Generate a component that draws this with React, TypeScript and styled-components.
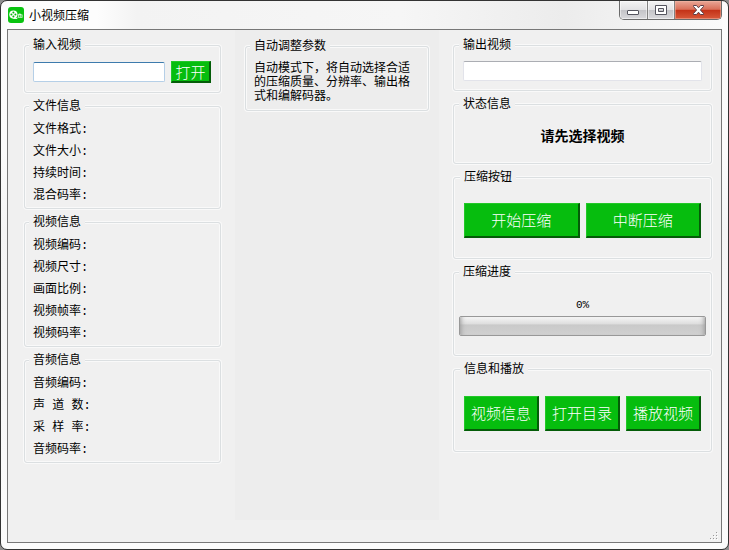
import React from 'react';
import styled, { createGlobalStyle, css } from 'styled-components';

const FACE = '#f0f0f0';
const GREEN = '#06bd0e';

const GlobalStyle = createGlobalStyle`
  * {
    box-sizing: border-box;
  }
  body {
    margin: 0;
    background: #8d8d8d;
    color: #000;
    font: 12px/14px 'Liberation Mono', 'Noto Sans CJK SC', monospace;
  }
  button,
  input {
    font: inherit;
  }
`;

const Window = styled.div`
  display: flex;
  flex-direction: column;
  min-height: 100vh;
  padding: 0 6px 6px;
  border: 1px solid #333;
  border-radius: 7px;
  background: linear-gradient(to bottom, #fcfcfc 0, #fbfbfb 150px, #f4f4f4 230px, #fbfbfb 100%);
`;

const TitleBar = styled.header`
  display: flex;
  align-items: center;
  gap: 5px;
  height: 28px;
  padding-left: 1px;
  border-radius: 6px 6px 0 0;
  background: linear-gradient(to right, #fdfdfd 0, #fdfdfd 90px, #f3f3f3 130px, #f6f6f6 55%, #ececec 78%, #fafafa 100%);
`;

const Title = styled.h1`
  flex: 1;
  margin: 0;
  font: 400 12px/16px 'Noto Sans CJK SC', sans-serif;
`;

const Controls = styled.div`
  display: flex;
  align-self: flex-start;
  height: 19px;
  border: 1px solid #6b6b6b;
  border-top: 0;
  border-radius: 0 0 5px 5px;
  overflow: hidden;
`;

const ControlButton = styled.button<{ $close?: boolean }>`
  display: grid;
  place-items: center;
  width: ${(p) => (p.$close ? 47 : 27)}px;
  padding: 0;
  border: 0;
  box-shadow: inset 0 0 0 1px #ffffff80;
  background: linear-gradient(#f4f4f4 0, #e2e2e4 48%, #c4c4c8 52%, #d9d9dc 100%);

  & + & {
    border-left: 1px solid #828282;
  }

  ${(p) =>
    p.$close &&
    css`
      box-shadow: inset 0 0 0 1px #f3b9a880;
      background: linear-gradient(#e9a797 0, #d9705a 46%, #c43318 52%, #d8593a 100%);
    `}
`;

const Client = styled.main`
  flex: 1;
  display: grid;
  grid-template-columns: minmax(0, 197fr) minmax(0, 204fr) minmax(0, 259fr);
  column-gap: 14px;
  position: relative;
  padding: 0 9px 0 16px;
  border: 1px solid #777;
  background: ${FACE};
`;

const Column = styled.div`
  display: flex;
  flex-direction: column;
  gap: 6px;
  padding-top: 8px;
`;

const AutoPanel = styled(Column)`
  margin-bottom: 22px;
  padding: 9px 10px 0;
  background: #ededed;
`;

const Group = styled.fieldset<{ $pad?: string }>`
  min-width: 0;
  margin: 0;
  padding: ${(p) => p.$pad ?? '6px 8px 1px'};
  border: 1px solid #dbdfe1;
  border-radius: 3px;
  box-shadow: 0 0 0 1px #f9f9f9, inset 0 0 0 1px #f9f9f9;
`;

const Legend = styled.legend<{ $onPanel?: boolean; $indent?: boolean }>`
  height: 14px;
  margin-left: ${(p) => (p.$indent ? 0 : -4)}px;
  padding: 0 4px;
  background: ${(p) => (p.$onPanel ? '#ededed' : FACE)};
  line-height: 16px;
`;

const Row = styled.div`
  display: flex;
  align-items: center;
  gap: 6px;
`;

const InfoList = styled.ul`
  margin: 0;
  padding: 0;
  list-style: none;
`;

const InfoItem = styled.li`
  line-height: 22px;
`;

const PathInput = styled.input<{ $active?: boolean }>`
  flex: 1;
  min-width: 0;
  height: 20px;
  padding: 0 3px;
  border: 1px solid ${(p) => (p.$active ? '#b5cfe7' : '#e2e3ea')};
  border-top-color: ${(p) => (p.$active ? '#3d7bad' : '#abadb3')};
  border-radius: 2px;
  background: #fff;
  outline: 0;
`;

const GreenButton = styled.button<{ $small?: boolean }>`
  flex: ${(p) => (p.$small ? '0 0 40px' : '1')};
  height: ${(p) => (p.$small ? 22 : 35)}px;
  padding: 0;
  border: solid;
  border-width: 1px 2px 2px 1px;
  border-color: #22c828 #045c08 #045c08 #22c828;
  background: ${GREEN};
  color: #fff;
  font: 300 15px/18px 'Noto Sans CJK SC', sans-serif;
  white-space: nowrap;
`;

const Hint = styled.p`
  margin: 0;
`;

const Status = styled.p`
  margin: 0;
  font: 700 14px/20px 'Noto Sans CJK SC', sans-serif;
  text-align: center;
`;

const ProgressLabel = styled.label`
  display: block;
  margin-bottom: 4px;
  font-size: 11px;
  text-align: center;
`;

const ProgressBar = styled.progress`
  display: block;
  width: 100%;
  height: 20px;
  appearance: none;
  border: 1px solid #989898;
  border-radius: 2px;
  overflow: hidden;

  &::-webkit-progress-bar {
    background: linear-gradient(#f6f6f6 0, #dedede 38%, #c9c9c9 44%, #d0d0d0 100%);
    box-shadow: inset 6px 0 5px -5px #999, inset -6px 0 5px -5px #999;
  }
  &::-webkit-progress-value {
    background: ${GREEN};
  }
`;

const Grip = styled.svg`
  position: absolute;
  right: 2px;
  bottom: 0;
`;

const AppIcon = () => (
  <svg width="16" height="16" viewBox="0 0 16 16" aria-hidden="true">
    <rect width="16" height="16" rx="3" fill="#08c30f" />
    <circle cx="5.4" cy="7.6" r="4.1" fill="#fff" />
    <path d="M5.5 11.4h3.6l.6-.8" fill="none" stroke="#fff" />
    <g fill="#08b80f">
      <circle cx="5.4" cy="5.5" r="1" />
      <circle cx="3.4" cy="7.5" r="1" />
      <circle cx="7.4" cy="7.5" r="1" />
      <circle cx="5.4" cy="9.5" r="1" />
    </g>
    <path d="M10 7.4q1.7-1.9 3.5 0l1 .2v3.2H10z" fill="#d9f7da" />
    <path d="M11.3 8.2v1.8M13.1 8.2v1.8" stroke="#08b80f" strokeWidth=".9" />
  </svg>
);

const MinimizeIcon = () => (
  <svg width="13" height="14" viewBox="0 0 13 14" aria-hidden="true">
    <rect x=".5" y="7.5" width="11" height="4" rx=".5" fill="#fff" stroke="#55555f" />
  </svg>
);

const MaximizeIcon = () => (
  <svg width="12" height="10" viewBox="0 0 12 10" aria-hidden="true">
    <path
      d="M.5.5h11v9H.5zM3.5 3.5v3h5v-3z"
      fill="#fff"
      fillRule="evenodd"
      stroke="#55555f"
    />
  </svg>
);

const CloseIcon = () => (
  <svg width="13" height="12" viewBox="0 0 13 12" aria-hidden="true">
    <path
      d="M1.5 1.5h3l2 2.3 2-2.3h3v1L8.4 6l3.1 3.5v1h-3l-2-2.3-2 2.3h-3v-1L4.6 6 1.5 2.5z"
      fill="#fff"
      stroke="#5b3f48"
    />
  </svg>
);

const SizeGrip = () => (
  <Grip width="11" height="11" viewBox="0 0 11 11" aria-hidden="true">
    {[
      [8, 1],
      [5, 4],
      [8, 4],
      [2, 7],
      [5, 7],
      [8, 7],
    ].map(([x, y]) => (
      <g key={`${x}-${y}`}>
        <rect x={x + 1} y={y + 1} width="1" height="1" fill="#fff" />
        <rect x={x} y={y} width="1" height="1" fill="#999" />
      </g>
    ))}
  </Grip>
);

const infoGroups = [
  { title: '文件信息', items: ['文件格式:', '文件大小:', '持续时间:', '混合码率:'] },
  { title: '视频信息', items: ['视频编码:', '视频尺寸:', '画面比例:', '视频帧率:', '视频码率:'] },
  { title: '音频信息', items: ['音频编码:', '声 道 数:', '采 样 率:', '音频码率:'] },
];

export default function App() {
  return (
    <>
      <GlobalStyle />
      <Window>
        <TitleBar>
          <AppIcon />
          <Title>小视频压缩</Title>
          <Controls>
            <ControlButton aria-label="最小化">
              <MinimizeIcon />
            </ControlButton>
            <ControlButton aria-label="最大化">
              <MaximizeIcon />
            </ControlButton>
            <ControlButton $close aria-label="关闭">
              <CloseIcon />
            </ControlButton>
          </Controls>
        </TitleBar>
        <Client>
          <Column>
            <Group $pad="9px 9px 9px 8px">
              <Legend>输入视频</Legend>
              <Row>
                <PathInput $active type="text" aria-label="输入视频" />
                <GreenButton $small>打开</GreenButton>
              </Row>
            </Group>
            {infoGroups.map((group) => (
              <Group key={group.title}>
                <Legend>{group.title}</Legend>
                <InfoList>
                  {group.items.map((item) => (
                    <InfoItem key={item}>{item}</InfoItem>
                  ))}
                </InfoList>
              </Group>
            ))}
          </Column>
          <AutoPanel>
            <Group $pad="9px 16px 6px 8px">
              <Legend $onPanel>自动调整参数</Legend>
              <Hint>自动模式下，将自动选择合适的压缩质量、分辨率、输出格式和编解码器。</Hint>
            </Group>
          </AutoPanel>
          <Column>
            <Group $pad="9px 9px">
              <Legend>输出视频</Legend>
              <Row>
                <PathInput type="text" aria-label="输出视频" />
              </Row>
            </Group>
            <Group $pad="14px 9px 18px">
              <Legend>状态信息</Legend>
              <Status>请先选择视频</Status>
            </Group>
            <Group $pad="19px 10px 20px">
              <Legend>压缩按钮</Legend>
              <Row>
                <GreenButton>开始压缩</GreenButton>
                <GreenButton>中断压缩</GreenButton>
              </Row>
            </Group>
            <Group $pad="19px 5px">
              <Legend $indent>压缩进度</Legend>
              <ProgressLabel htmlFor="progress">0%</ProgressLabel>
              <ProgressBar id="progress" value={0} max={100} />
            </Group>
            <Group $pad="20px 10px">
              <Legend>信息和播放</Legend>
              <Row>
                <GreenButton>视频信息</GreenButton>
                <GreenButton>打开目录</GreenButton>
                <GreenButton>播放视频</GreenButton>
              </Row>
            </Group>
          </Column>
          <SizeGrip />
        </Client>
      </Window>
    </>
  );
}
